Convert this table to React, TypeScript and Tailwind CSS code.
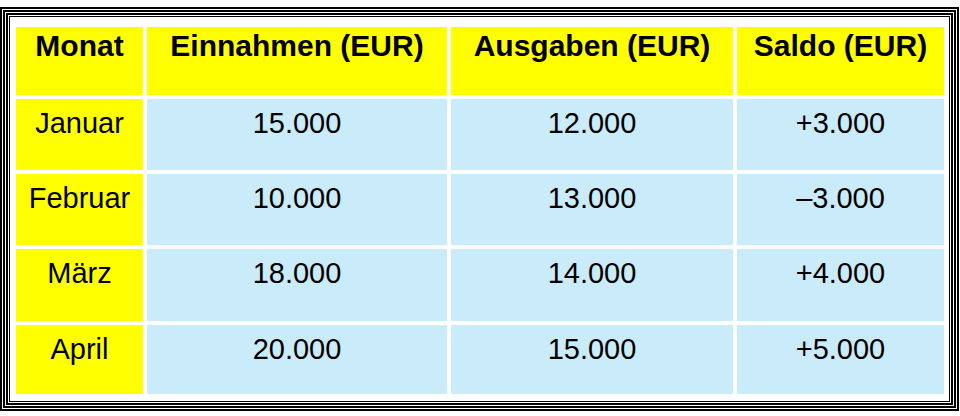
import React from "react";

const rows = [
  ["Januar", "15.000", "12.000", "+3.000"],
  ["Februar", "10.000", "13.000", "–3.000"],
  ["März", "18.000", "14.000", "+4.000"],
  ["April", "20.000", "15.000", "+5.000"],
];

export default function App() {
  return (
    <div className="w-[960px] h-[416px] bg-white pt-[7px]" style={{ fontFamily: '"Liberation Sans", Arial, sans-serif' }}>
      <div className="w-[959px] h-[404px] border-2 border-black p-px">
        <div className="h-full border-2 border-black p-px">
          <div className="h-full border-2 border-black p-px">
            <div className="h-full border border-black pl-[6px] pt-[10px] pr-[5px] pb-[6px]">
              <div className="grid grid-cols-[127px_300px_282px_207px] grid-rows-[68px_71px_71px_72px_69px] gap-[4px] leading-[34px] text-black">
                {["Monat", "Einnahmen (EUR)", "Ausgaben (EUR)", "Saldo (EUR)"].map((h) => (
                  <div key={h} className="bg-[#ffff00] font-bold text-center text-[30px] pt-[2px]">
                    {h}
                  </div>
                ))}
                {rows.map((r) => (
                  <React.Fragment key={r[0]}>
                    <div className="bg-[#ffff00] text-center text-[29px] pt-[7px]">{r[0]}</div>
                    <div className="bg-[#c9ebfa] text-center text-[29px] pt-[7px]">{r[1]}</div>
                    <div className="bg-[#c9ebfa] text-center text-[29px] pt-[7px]">{r[2]}</div>
                    <div className="bg-[#c9ebfa] text-center text-[29px] pt-[7px]">{r[3]}</div>
                  </React.Fragment>
                ))}
              </div>
            </div>
          </div>
        </div>
      </div>
    </div>
  );
}
